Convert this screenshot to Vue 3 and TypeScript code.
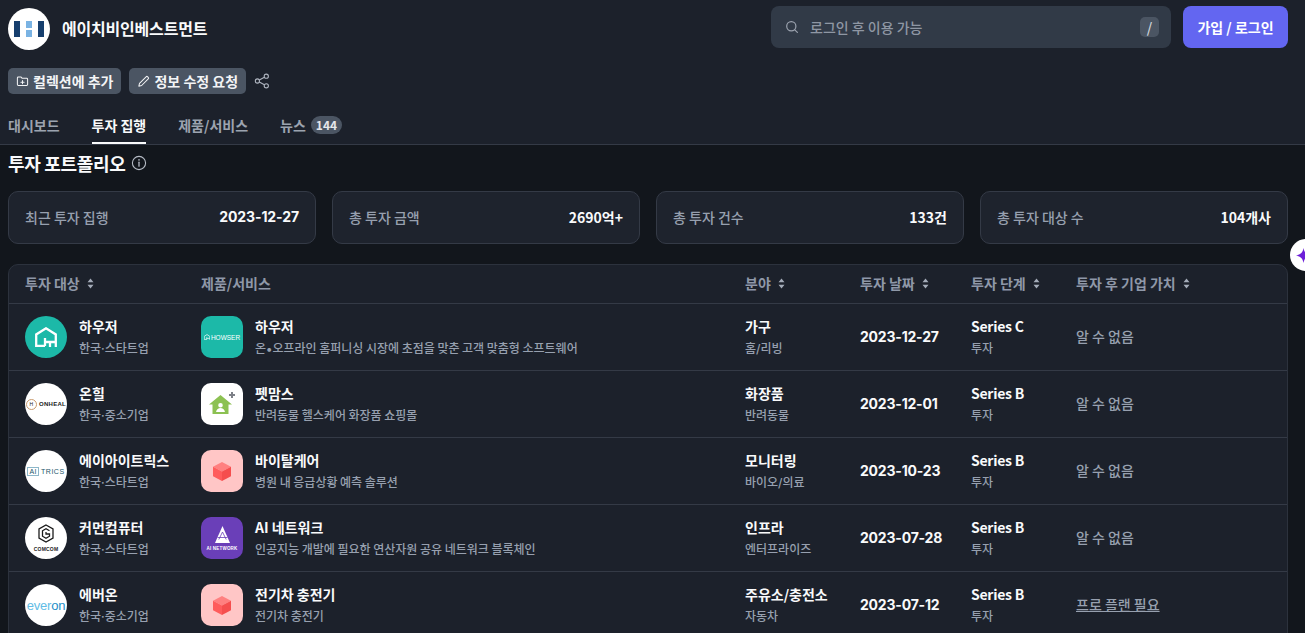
<script setup lang="ts">
interface Row {
  name: string
  region: string
  logo: string
  product: string
  desc: string
  thumb: string
  field: string
  sub: string
  date: string
  stage: string
  value: string
  locked?: boolean
}

const tabs = ['대시보드', '투자 집행', '제품/서비스']

const stats = [
  { label: '최근 투자 집행', value: '2023-12-27', isDate: true },
  { label: '총 투자 금액', value: '2690억+' },
  { label: '총 투자 건수', value: '133건' },
  { label: '총 투자 대상 수', value: '104개사' },
]

const columns = [
  { label: '투자 대상', sort: true },
  { label: '제품/서비스', sort: false },
  { label: '분야', sort: true },
  { label: '투자 날짜', sort: true },
  { label: '투자 단계', sort: true },
  { label: '투자 후 기업 가치', sort: true },
]

const rows: Row[] = [
  { name: '하우저', region: '한국·스타트업', logo: 'howser', product: '하우저', desc: '온•오프라인 홈퍼니싱 시장에 초점을 맞춘 고객 맞춤형 소프트웨어', thumb: 'howser', field: '가구', sub: '홈/리빙', date: '2023-12-27', stage: 'Series C', value: '알 수 없음' },
  { name: '온힐', region: '한국·중소기업', logo: 'onheal', product: '펫맘스', desc: '반려동물 헬스케어 화장품 쇼핑몰', thumb: 'pet', field: '화장품', sub: '반려동물', date: '2023-12-01', stage: 'Series B', value: '알 수 없음' },
  { name: '에이아이트릭스', region: '한국·스타트업', logo: 'aitrics', product: '바이탈케어', desc: '병원 내 응급상황 예측 솔루션', thumb: 'box', field: '모니터링', sub: '바이오/의료', date: '2023-10-23', stage: 'Series B', value: '알 수 없음' },
  { name: '커먼컴퓨터', region: '한국·스타트업', logo: 'comcom', product: 'AI 네트워크', desc: '인공지능 개발에 필요한 연산자원 공유 네트워크 블록체인', thumb: 'ai', field: '인프라', sub: '엔터프라이즈', date: '2023-07-28', stage: 'Series B', value: '알 수 없음' },
  { name: '에버온', region: '한국·중소기업', logo: 'everon', product: '전기차 충전기', desc: '전기차 충전기', thumb: 'box', field: '주유소/충전소', sub: '자동차', date: '2023-07-12', stage: 'Series B', value: '프로 플랜 필요', locked: true },
]
</script>

<template>
  <div class="page">
    <header class="top">
      <div class="brand-row">
        <div class="brand">
          <span class="brand-logo">
            <svg width="30" height="18" viewBox="0 0 30 18">
              <rect x="0" y="1" width="6" height="16" fill="#173f6e" />
              <rect x="24" y="1" width="6" height="16" fill="#173f6e" />
              <rect x="12" y="1" width="6" height="7" fill="#7ab3e3" />
              <rect x="12" y="10" width="6" height="7" fill="#7ab3e3" />
            </svg>
          </span>
          <h1>에이치비인베스트먼트</h1>
        </div>
        <div class="actions">
          <div class="search">
            <svg width="14" height="14" viewBox="0 0 14 14" fill="none" stroke="#9ca3af" stroke-width="1.2">
              <circle cx="6.3" cy="6.3" r="4.6" />
              <path d="M9.8 9.8l2.6 2.6" stroke-linecap="round" />
            </svg>
            <span class="search-text">로그인 후 이용 가능</span>
            <kbd>/</kbd>
          </div>
          <button class="login" type="button">가입 / 로그인</button>
        </div>
      </div>

      <div class="tools">
        <button class="tool" type="button">
          <svg width="13" height="13" viewBox="0 0 14 14" fill="none" stroke="#f3f4f6" stroke-width="1.1" stroke-linejoin="round">
            <path d="M1.5 3.2c0-.6.4-1 1-1h3l1.2 1.4h4.8c.6 0 1 .4 1 1v5.6c0 .6-.4 1-1 1h-9c-.6 0-1-.4-1-1z" />
            <path d="M7 6v3.4M5.3 7.7h3.4" stroke-linecap="round" />
          </svg>
          컬렉션에 추가
        </button>
        <button class="tool" type="button">
          <svg width="13" height="13" viewBox="0 0 14 14" fill="none" stroke="#f3f4f6" stroke-width="1.1" stroke-linejoin="round">
            <path d="M2 12l.7-3L9.8 1.9c.5-.5 1.2-.5 1.7 0l.6.6c.5.5.5 1.2 0 1.7L5 11.3z" />
          </svg>
          정보 수정 요청
        </button>
        <svg width="16" height="16" viewBox="0 0 16 16" fill="none" stroke="#aeb4bf" stroke-width="1.1">
          <circle cx="3.4" cy="8" r="2.1" />
          <circle cx="12.3" cy="3.2" r="2.1" />
          <circle cx="12.3" cy="12.8" r="2.1" />
          <path d="M5.3 7l5.1-2.8M5.3 9l5.1 2.8" />
        </svg>
      </div>

      <nav class="tabs">
        <a v-for="tab in tabs" :key="tab" class="tab" :class="{ active: tab === '투자 집행' }">{{ tab }}</a>
        <a class="tab">뉴스 <span class="count">144</span></a>
      </nav>
    </header>

    <main class="content">
      <div class="section-title">
        <h2>투자 포트폴리오</h2>
        <svg width="16" height="16" viewBox="0 0 16 16" fill="none" stroke="#b6bcc6" stroke-width="1.1">
          <circle cx="8" cy="8" r="6.6" />
          <path d="M8 7.2v4" stroke-linecap="round" stroke-width="1.3" />
          <circle cx="8" cy="4.9" r=".8" fill="#b6bcc6" stroke="none" />
        </svg>
      </div>

      <section class="stats">
        <div v-for="stat in stats" :key="stat.label" class="stat">
          <span class="stat-label">{{ stat.label }}</span>
          <strong :class="{ 'date-text': stat.isDate }">{{ stat.value }}</strong>
        </div>
      </section>

      <section class="table">
        <div class="row head">
          <div v-for="col in columns" :key="col.label" class="th">
            {{ col.label }}
            <svg v-if="col.sort" width="7" height="13" viewBox="0 0 7 13" fill="#a3abb8">
              <path d="M3.5 1.500L6.500 5.200H.5zM3.500 11.500L.5 7.800h6z" />
            </svg>
          </div>
        </div>

        <div v-for="row in rows" :key="row.name" class="row body">
          <div class="cell media">
            <span class="avatar round" :class="row.logo">
              <svg v-if="row.logo === 'howser'" width="22" height="20" viewBox="0 0 22 20" fill="none" stroke="#fff" stroke-width="2.300">
                <path d="M10 19H1.200V7.500L11 1.300l9.800 6.200V20" />
                <path d="M10 19v-8M10 15h11M15 15v5" />
              </svg>
              <span v-else-if="row.logo === 'onheal'" class="mark onheal-mark"><i>H</i>ONHEAL</span>
              <span v-else-if="row.logo === 'aitrics'" class="mark aitrics-mark"><i>AI</i>TRICS</span>
              <span v-else-if="row.logo === 'comcom'" class="comcom-mark">
                <svg width="16" height="19" viewBox="0 0 16 19" fill="none" stroke="#1c1c1c" stroke-width="1.300">
                  <path d="M8 1l7 4v9l-7 4-7-4V5z" />
                  <path d="M11.500 6.800L8 4.800 4.500 6.800v5.400L8 14.200l3.500-2V10H8V8" />
                </svg>
                <b>COMCOM</b>
              </span>
              <span v-else class="mark everon-mark">ever<em>on</em></span>
            </span>
            <div class="text">
              <strong>{{ row.name }}</strong>
              <small>{{ row.region }}</small>
            </div>
          </div>

          <div class="cell media">
            <span class="avatar square" :class="'t-' + row.thumb">
              <span v-if="row.thumb === 'howser'" class="howser-word">
                <svg width="6" height="6" viewBox="0 0 22 20" fill="none" stroke="#fff" stroke-width="2.500">
                  <path d="M10 19H1V7.500L11 1l10 6.500V20" />
                  <path d="M10 19v-8M10 15h11" />
                </svg>
                HOWSER
              </span>
              <svg v-else-if="row.thumb === 'pet'" width="27" height="24" viewBox="0 0 27 24">
                <path d="M0 12.500L11.500 3 23 12.500h-3.500V22h-16v-9.500z" fill="#8cc152" />
                <path d="M11.500 11a2.300 2.300 0 110 4.600 2.300 2.300 0 010-4.600zM7 20c.5-2.500 2.500-4 4.500-4s4 1.500 4.500 4z" fill="#fff" />
                <path d="M23 0v6M20 3h6" stroke="#7d8087" stroke-width="2" />
              </svg>
              <svg v-else-if="row.thumb === 'box'" width="18" height="19" viewBox="0 0 18 19">
                <path d="M9 0l9 4.700L9 9.400 0 4.700z" fill="#ff8080" />
                <path d="M0 4.700l9 4.700V19l-9-4.700z" fill="#ff5c5c" />
                <path d="M18 4.700L9 9.400V19l9-4.700z" fill="#f54e4e" />
              </svg>
              <span v-else class="ai-mark">
                <svg width="15" height="17" viewBox="0 0 15 17" fill="none">
                  <path d="M7.500 0L15 17H0z" fill="#fff" />
                  <path d="M7.500 6L3.800 13.500M7.500 6l3.700 7.500M2.500 11.500l10 0" stroke="#6a3fb8" stroke-width=".8" />
                </svg>
                <b>AI NETWORK</b>
              </span>
            </span>
            <div class="text">
              <strong>{{ row.product }}</strong>
              <small>{{ row.desc }}</small>
            </div>
          </div>

          <div class="cell text">
            <strong>{{ row.field }}</strong>
            <small>{{ row.sub }}</small>
          </div>
          <div class="cell date-text">{{ row.date }}</div>
          <div class="cell text stage">
            <strong>{{ row.stage }}</strong>
            <small>투자</small>
          </div>
          <div class="cell value" :class="{ locked: row.locked }">{{ row.value }}</div>
        </div>
      </section>
    </main>

    <button class="assist" type="button" aria-label="AI">
      <svg width="15" height="15" viewBox="0 0 16 16">
        <path d="M8 0c.7 4.600 2.800 7 8 8-5.200 1-7.300 3.400-8 8-.7-4.600-2.800-7-8-8 5.200-1 7.300-3.400 8-8z" fill="#6d1fd8" />
      </svg>
    </button>
  </div>
</template>

<style>
html,
body {
  margin: 0;
  background: #12161c;
  overflow: hidden;
}
</style>

<style scoped>
.page {
  position: relative;
  width: 1305px;
  height: 633px;
  overflow: hidden;
  font-family: "Noto Sans CJK KR", sans-serif;
  color: #f9fafb;
  background: #12161c;
}

.top {
  background: #1c212b;
  border-bottom: 1px solid #343a46;
  padding: 6px 17px 0 8px;
  height: 138px;
}

.brand-row {
  display: flex;
  justify-content: space-between;
  height: 44px;
}

.brand {
  display: flex;
  align-items: center;
  gap: 12px;
}

.brand-logo {
  width: 42px;
  height: 42px;
  margin-top: 2px;
  border-radius: 50%;
  background: #fff;
  display: flex;
  align-items: center;
  justify-content: center;
}

h1 {
  margin: 0;
  font-size: 16px;
  font-weight: 700;
  letter-spacing: -0.2px;
}

.actions {
  display: flex;
  gap: 12px;
}

.search {
  width: 400px;
  height: 42px;
  box-sizing: border-box;
  padding: 0 12px 0 14px;
  display: flex;
  align-items: center;
  background: #313a47;
  border-radius: 8px;
}

.search-text {
  flex: 1;
  margin-left: 11px;
  font-size: 14px;
  font-weight: 500;
  color: #8f97a4;
}

kbd {
  width: 19px;
  height: 20px;
  border-radius: 5px;
  background: #4b5563;
  color: #d1d5db;
  font: 500 14px "Noto Sans CJK KR", sans-serif;
  text-align: center;
  line-height: 20px;
}

.login {
  width: 105px;
  height: 42px;
  border: 0;
  border-radius: 8px;
  background: #6366f1;
  color: #fff;
  font: 700 14px "Noto Sans CJK KR", sans-serif;
  padding: 0;
}

.tools {
  display: flex;
  align-items: center;
  gap: 8px;
  margin-top: 18px;
}

.tool {
  height: 26px;
  padding: 0 8px;
  display: flex;
  align-items: center;
  gap: 4px;
  border: 0;
  border-radius: 5px;
  background: #4b5563;
  color: #f3f4f6;
  font: 700 14px "Noto Sans CJK KR", sans-serif;
}

.tabs {
  display: flex;
  gap: 32px;
  margin-top: 12px;
  height: 38px;
}

.tab {
  height: 38px;
  display: flex;
  align-items: center;
  gap: 5px;
  box-sizing: border-box;
  font-size: 14px;
  font-weight: 700;
  color: #9ca3af;
}

.tab.active {
  color: #f9fafb;
  border-bottom: 2px solid #f9fafb;
  padding-top: 2px;
}

.count {
  height: 18px;
  padding: 0 5px;
  border-radius: 9px;
  background: #4b5563;
  color: #e5e7eb;
  font-size: 12px;
  line-height: 18px;
}

.content {
  padding: 5px 17px 0 8px;
}

.section-title {
  display: flex;
  align-items: center;
  gap: 5px;
  height: 26px;
}

h2 {
  margin: 0;
  font-size: 18px;
  font-weight: 700;
  letter-spacing: -0.3px;
}

.stats {
  display: grid;
  grid-template-columns: repeat(4, 1fr);
  gap: 16px;
  margin-top: 15px;
}

.stat {
  height: 53px;
  box-sizing: border-box;
  padding: 0 16px 2px;
  display: flex;
  align-items: center;
  justify-content: space-between;
  background: #1e232d;
  border: 1px solid #343a46;
  border-radius: 10px;
}

.stat-label {
  font-size: 14px;
  font-weight: 500;
  color: #97a0af;
}

.stat strong {
  font-size: 14px;
  font-weight: 700;
}

.stat .date-text {
  padding-bottom: 0;
  letter-spacing: -0.1px;
}

.table {
  margin-top: 20px;
  background: #1c212b;
  border: 1px solid #2c323d;
  border-radius: 10px 10px 0 0;
}

.row {
  display: grid;
  grid-template-columns: 176px 544px 115px 111px 105px 1fr;
  padding: 0 16px;
  border-bottom: 1px solid #343a46;
  align-items: center;
}

.head {
  height: 38px;
}

.th {
  display: flex;
  align-items: center;
  gap: 7px;
  padding-bottom: 2px;
  font-size: 14px;
  font-weight: 700;
  color: #8f98a8;
}

.body {
  height: 67px;
  box-sizing: border-box;
}

.cell {
  min-width: 0;
}

.media {
  display: flex;
  align-items: center;
  gap: 12px;
}

.text {
  display: flex;
  flex-direction: column;
  gap: 4px;
  padding-bottom: 1px;
}

.text strong {
  font-size: 14px;
  line-height: 20px;
  font-weight: 700;
  color: #f9fafb;
}

.text small {
  font-family: Inter, "Noto Sans CJK KR", sans-serif;
  font-size: 12px;
  line-height: 18px;
  font-weight: 500;
  color: #97a0af;
  word-spacing: -0.6px;
  white-space: nowrap;
}

.stage strong {
  letter-spacing: -0.25px;
}

.date-text {
  font-family: Inter, sans-serif;
  font-size: 14px;
  font-weight: 700;
  letter-spacing: -0.2px;
  padding-bottom: 2px;
}

.value {
  font-size: 14px;
  font-weight: 500;
  color: #97a0af;
  padding-bottom: 3px;
}

.value.locked {
  text-decoration: underline;
}

.avatar {
  flex: none;
  width: 42px;
  height: 42px;
  display: flex;
  align-items: center;
  justify-content: center;
  overflow: hidden;
  background: #fff;
}

.round {
  border-radius: 50%;
}

.square {
  border-radius: 10px;
}

.howser,
.t-howser {
  background: #1cb9a8;
}

.t-box {
  background: #ffc6c6;
}

.t-ai {
  background: #6a3fb8;
}

.mark {
  font-family: "Liberation Sans", sans-serif;
  white-space: nowrap;
  color: #222;
}

.mark i {
  font-style: normal;
}

.onheal-mark {
  display: flex;
  align-items: center;
  gap: 2px;
  font-size: 6px;
  font-weight: 700;
  letter-spacing: 0.3px;
}

.onheal-mark i {
  width: 9px;
  height: 9px;
  line-height: 9px;
  border: 1px solid #c89a6e;
  border-radius: 50%;
  font-size: 5px;
  font-weight: 400;
  letter-spacing: 0;
  text-align: center;
}

.aitrics-mark {
  display: flex;
  align-items: center;
  gap: 2px;
  font-size: 7px;
  letter-spacing: 0.5px;
  color: #21566b;
}

.aitrics-mark i {
  border: 1px solid #8db7c9;
  padding: 0 1px;
}

.everon-mark {
  font-size: 13px;
  letter-spacing: -0.2px;
  color: #62bde6;
}

.everon-mark em {
  font-style: normal;
  color: #1e8fc9;
}

.comcom-mark,
.ai-mark {
  display: flex;
  flex-direction: column;
  align-items: center;
  gap: 3px;
}

.comcom-mark b {
  font: 700 5px "Liberation Sans", sans-serif;
  letter-spacing: 0.2px;
  color: #222;
}

.ai-mark b {
  font: 700 4.5px "Liberation Sans", sans-serif;
  letter-spacing: 0.2px;
  color: #fff;
}

.howser-word {
  display: flex;
  align-items: center;
  gap: 1px;
  font: 400 6.5px "Liberation Sans", sans-serif;
  color: #fff;
}

.assist {
  position: absolute;
  left: 1290px;
  top: 239px;
  width: 32px;
  height: 32px;
  padding: 0 0 0 6px;
  border: 0;
  border-radius: 50%;
  background: #fff;
  display: flex;
  align-items: center;
}
</style>
